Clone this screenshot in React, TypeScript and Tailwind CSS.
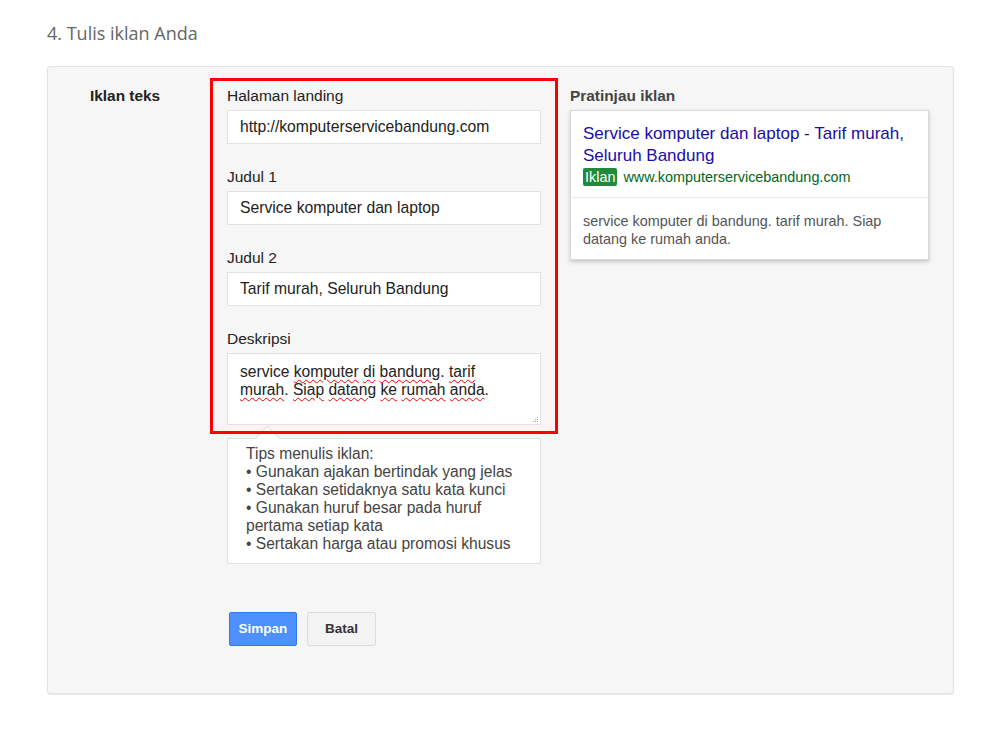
const fields = [
  { label: "Halaman landing", value: "http://komputerservicebandung.com" },
  { label: "Judul 1", value: "Service komputer dan laptop" },
  { label: "Judul 2", value: "Tarif murah, Seluruh Bandung" },
];

const tips = [
  "Tips menulis iklan:",
  "• Gunakan ajakan bertindak yang jelas",
  "• Sertakan setidaknya satu kata kunci",
  "• Gunakan huruf besar pada huruf pertama setiap kata",
  "• Sertakan harga atau promosi khusus",
];

function Typo({ children }: { children: string }) {
  return (
    <span className="underline decoration-wavy decoration-[#e00] decoration-1 underline-offset-[2px]">
      {children}
    </span>
  );
}

export default function App() {
  return (
    <div className="min-h-screen bg-white pl-[47px] pt-[20px] font-['Liberation_Sans',Arial,sans-serif]">
      <h2 className="font-['Open_Sans',sans-serif] text-[18px] leading-[26px] text-[#666]">
        4. Tulis iklan Anda
      </h2>

      <div className="mt-[20px] w-[907px] rounded-[3px] border border-[#e3e3e3] bg-[#f6f6f6] pt-[11px] pb-[47px] shadow-[0_1px_1px_rgba(0,0,0,0.08)]">
        <div className="flex">
          <div className="w-[162px] pl-[42px] pt-[8px] text-[15.4px] leading-[20px] font-bold text-[#222]">
            Iklan teks
          </div>

          <div className="w-[348px]">
            <div className="relative z-10 border-[3px] border-[#f00] px-[14px] pt-[5px] pb-[6px]">
              {fields.map((f) => (
                <div key={f.label} className="mb-[23px]">
                  <div className="text-[15.5px] leading-[20px] text-[#222]">{f.label}</div>
                  <div className="mt-[4px] flex h-[34px] items-center border border-[#e2e2e2] bg-white pl-[12px] text-[15.7px] text-[#222]">
                    {f.value}
                  </div>
                </div>
              ))}
              <div className="text-[15.5px] leading-[20px] text-[#222]">Deskripsi</div>
              <div className="relative mt-[4px] h-[72px] border border-[#e2e2e2] bg-white px-[12px] pt-[9px] text-[15.6px] leading-[18px] text-[#222]">
                <p>
                  service <Typo>komputer</Typo> <Typo>di</Typo> <Typo>bandung</Typo>. <Typo>tarif</Typo>
                  <br />
                  <Typo>murah</Typo>. <Typo>Siap</Typo> <Typo>datang</Typo> <Typo>ke</Typo>{" "}
                  <Typo>rumah</Typo> <Typo>anda</Typo>.
                </p>
                <svg className="absolute right-[1px] bottom-[1px]" width="7" height="7" viewBox="0 0 7 7">
                  <rect x="5" y="1" width="1" height="1" fill="#aaa" />
                  <rect x="3" y="3" width="1" height="1" fill="#aaa" />
                  <rect x="5" y="3" width="1" height="1" fill="#aaa" />
                  <rect x="1" y="5" width="1" height="1" fill="#aaa" />
                  <rect x="3" y="5" width="1" height="1" fill="#aaa" />
                  <rect x="5" y="5" width="1" height="1" fill="#aaa" />
                </svg>
              </div>
            </div>

            <div className="relative mt-[4px] ml-[17px] w-[314px] rounded-[2px] border border-[#e0e0e0] bg-white pt-[6px] pr-[12px] pb-[10px] pl-[18px] text-[15.6px] leading-[18px] text-[#444]">
              <div className="absolute top-[-10px] left-[31px] h-[17px] w-[17px] rotate-45 border-t border-l border-[#dcdcdc] bg-white" />
              <div className="relative">
                {tips.map((t) => (
                  <div key={t}>{t}</div>
                ))}
              </div>
            </div>

            <div className="mt-[48px] ml-[19px] flex gap-[10px]">
              <button className="h-[34px] w-[68px] rounded-[2px] border border-[#3079ed] bg-[#4d90fe] text-[13.5px] font-bold text-white">
                Simpan
              </button>
              <button className="h-[34px] w-[69px] rounded-[2px] border border-[#dcdcdc] bg-[#f3f3f3] text-[13.5px] font-bold text-[#333]">
                Batal
              </button>
            </div>
          </div>

          <div className="ml-[12px] w-[359px] pt-[8px]">
            <div className="text-[15.4px] leading-[20px] font-bold text-[#444]">Pratinjau iklan</div>
            <div className="mt-[4px] border border-[#dadada] bg-white shadow-[0_2px_4px_rgba(0,0,0,0.2)]">
              <div className="px-[12px] pt-[12px] pb-[11px]">
                <div className="text-[17px] leading-[22px] text-[#1a0dab]">
                  Service komputer dan laptop - Tarif murah, Seluruh Bandung
                </div>
                <div className="mt-[1px] flex items-center text-[14.4px] leading-[18px] text-[#006621]">
                  <span className="mr-[6px] rounded-[2px] bg-[#1e8a3a] px-[2px] text-white">Iklan</span>
                  www.komputerservicebandung.com
                </div>
              </div>
              <div className="border-t border-[#ebebeb] px-[12px] pt-[14px] pb-[11px] text-[14.4px] leading-[18px] text-[#545454]">
                service komputer di bandung. tarif murah. Siap datang ke rumah anda.
              </div>
            </div>
          </div>
        </div>
      </div>
    </div>
  );
}
